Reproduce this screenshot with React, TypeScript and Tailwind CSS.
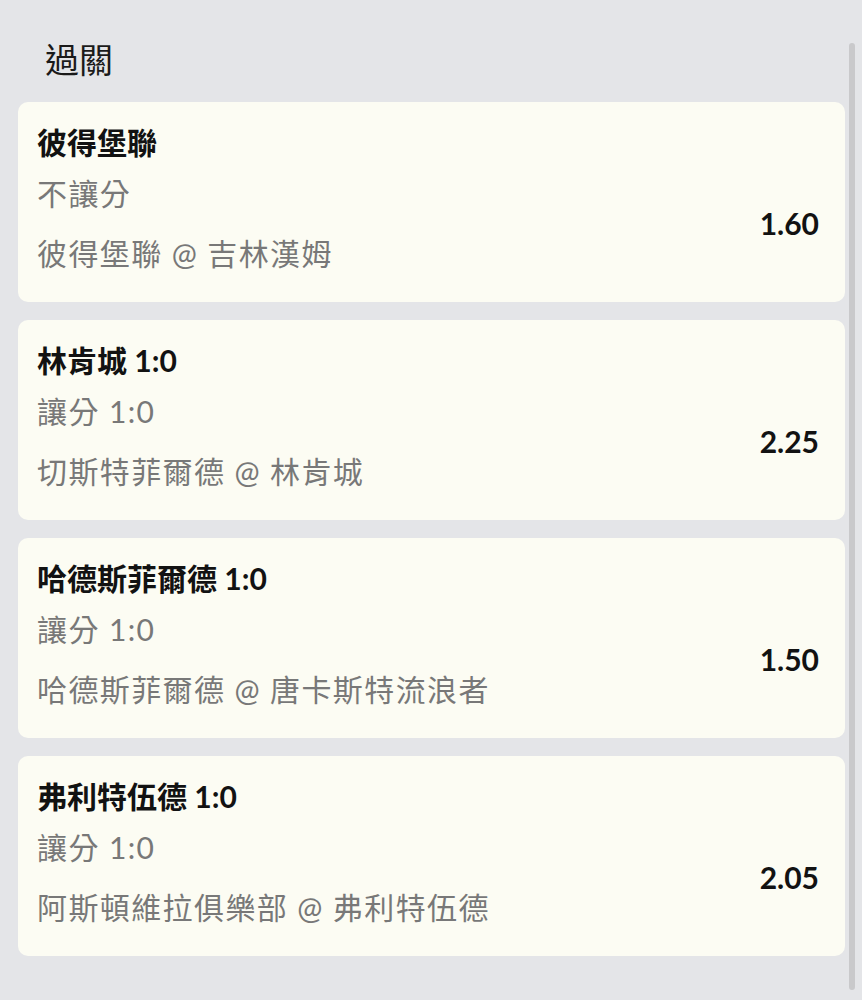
import React from 'react'

type Bet = {
  title: string
  market: string
  match: string
  odds: string
}

const bets: Bet[] = [
  { title: '彼得堡聯', market: '不讓分', match: '彼得堡聯 @ 吉林漢姆', odds: '1.60' },
  { title: '林肯城 1:0', market: '讓分 1:0', match: '切斯特菲爾德 @ 林肯城', odds: '2.25' },
  { title: '哈德斯菲爾德 1:0', market: '讓分 1:0', match: '哈德斯菲爾德 @ 唐卡斯特流浪者', odds: '1.50' },
  { title: '弗利特伍德 1:0', market: '讓分 1:0', match: '阿斯頓維拉俱樂部 @ 弗利特伍德', odds: '2.05' },
]

const font = "font-['Lato','Noto_Sans_CJK_TC',sans-serif]"

function BetCard({ bet }: { bet: Bet }) {
  return (
    <div className="h-[200px] rounded-[10px] bg-[#fcfcf3] pl-[19px] pr-[26px] pt-[20px]">
      <div className="text-[30px] leading-[40px] font-bold text-[#121212]">{bet.title}</div>
      <div className="mt-[11px] flex items-center justify-between">
        <div className="text-[30px] leading-[40px] tracking-[1.4px] text-[#787878]">
          <div>{bet.market}</div>
          <div className="mt-[20px]">{bet.match}</div>
        </div>
        <div className="text-[30px] leading-[40px] font-bold text-[#121212]">{bet.odds}</div>
      </div>
    </div>
  )
}

export default function App() {
  return (
    <div className={`relative h-[1000px] w-[862px] overflow-hidden bg-[#e4e5e8] ${font}`}>
      <div className="pl-[45px] pt-[38px] pb-[20px] text-[34px] leading-[44px] text-[#1a1a1a]">過關</div>
      <div className="flex flex-col gap-[18px] pl-[18px] pr-[17px]">
        {bets.map(bet => (
          <BetCard key={bet.title} bet={bet} />
        ))}
      </div>
      {/* scrollbar */}
      <div className="absolute left-[849px] top-[43px] h-[947px] w-[6px] rounded-full bg-[#c9c9cb]" />
    </div>
  )
}
